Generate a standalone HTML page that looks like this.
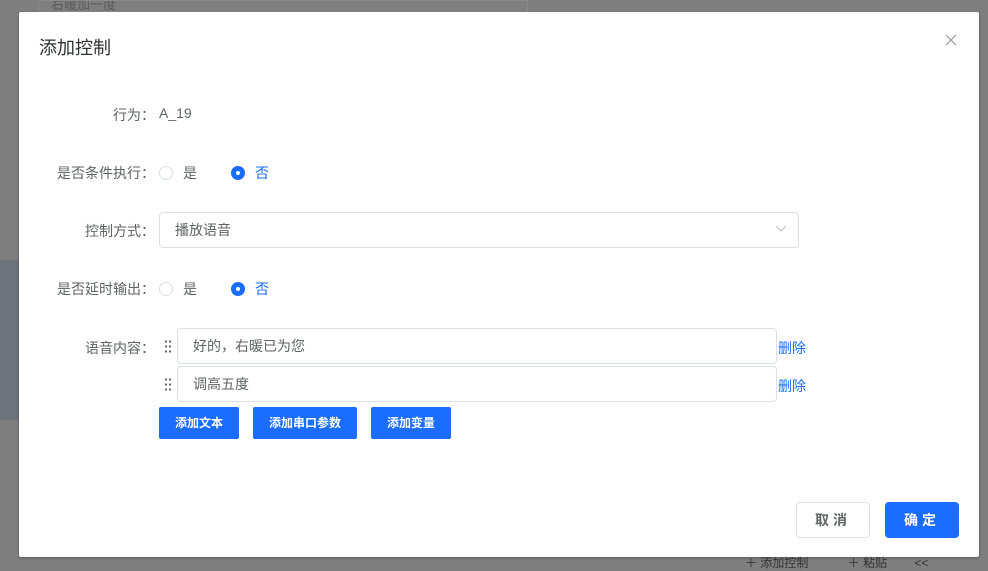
<!DOCTYPE html>
<html><head><meta charset="utf-8"><style>
*{margin:0;padding:0;box-sizing:border-box}
body{width:988px;height:569px;background:#7f7f7f;position:relative;overflow:hidden;font-family:"Liberation Sans","Noto Sans CJK SC",sans-serif;color:#606266;font-size:14px}
.a{position:absolute}
.dlg{left:19px;top:12px;width:960px;height:545px;background:#fff;border-radius:2px;box-shadow:0 1px 3px rgba(0,0,0,.3)}
.lbl{text-align:right;width:145px;left:10px;font-size:14px;color:#606266}
.r{width:14px;height:14px;border-radius:50%;border:1px solid #dcdfe6;background:#fff}
.rc{width:14px;height:14px;border-radius:50%;background:#1a6dff}
.rc::after{content:"";position:absolute;left:5px;top:5px;width:4px;height:4px;border-radius:50%;background:#fff}
.inp{border:1px solid #dcdfe6;border-radius:4px;background:#fff;height:36px;padding-left:15px;line-height:34px;color:#606266}
.btn{background:#1a6dff;color:#fff;font-weight:bold;font-size:12px;text-align:center;height:32px;line-height:32px;border-radius:2px}
.del{color:#1a6dff;font-size:14px}
.grip{width:8px;height:14px;background-image:radial-gradient(circle,#666 1px,transparent 1.3px);background-size:4px 5px}
</style></head><body>
<div class="a" style="left:38px;top:0;width:490px;height:12px;border:1px solid #8a8a8a;color:#5a5a5a;font-size:13px;padding-left:12px;line-height:8px;overflow:hidden">右暖加一度</div>
<div class="a" style="left:0;top:260px;width:19px;height:160px;background:#6f747c"></div>
<div class="a dlg"></div>
<div class="a" style="left:39px;top:34px;font-size:18px;color:#303133">添加控制</div>
<svg class="a" style="left:945px;top:34px" width="12" height="12"><path d="M1 1l10 10M11 1L1 11" stroke="#909399" stroke-width="1.1"/></svg>
<div class="a lbl" style="top:105px">行为：</div>
<div class="a" style="left:159px;top:105px">A_19</div>
<div class="a lbl" style="top:163px">是否条件执行：</div>
<div class="a r" style="left:159px;top:166px"></div><div class="a" style="left:183px;top:163px">是</div>
<div class="a rc" style="left:231px;top:166px"></div><div class="a" style="left:255px;top:163px;color:#1a6dff">否</div>
<div class="a lbl" style="top:221px">控制方式：</div>
<div class="a inp" style="left:159px;top:212px;width:640px">播放语音</div>
<svg class="a" style="left:775px;top:225px" width="12" height="8"><path d="M1 1l5 5 5-5" stroke="#c0c4cc" fill="none" stroke-width="1.2"/></svg>
<div class="a lbl" style="top:279px">是否延时输出：</div>
<div class="a r" style="left:159px;top:282px"></div><div class="a" style="left:183px;top:279px">是</div>
<div class="a rc" style="left:231px;top:282px"></div><div class="a" style="left:255px;top:279px;color:#1a6dff">否</div>
<div class="a lbl" style="top:338px">语音内容：</div>
<div class="a grip" style="left:164px;top:339px"></div>
<div class="a inp" style="left:177px;top:328px;width:600px">好的，右暖已为您</div>
<div class="a del" style="left:778px;top:338px">删除</div>
<div class="a grip" style="left:164px;top:377px"></div>
<div class="a inp" style="left:177px;top:366px;width:600px">调高五度</div>
<div class="a del" style="left:778px;top:376px">删除</div>
<div class="a btn" style="left:159px;top:407px;width:80px">添加文本</div>
<div class="a btn" style="left:253px;top:407px;width:104px">添加串口参数</div>
<div class="a btn" style="left:371px;top:407px;width:80px">添加变量</div>
<div class="a" style="left:796px;top:502px;width:74px;height:36px;border:1px solid #dcdfe6;border-radius:4px;text-align:center;line-height:34px;font-weight:bold;letter-spacing:4px;color:#606266">取消</div>
<div class="a" style="left:885px;top:502px;width:74px;height:36px;background:#1a6dff;border-radius:4px;text-align:center;line-height:36px;font-weight:bold;letter-spacing:4px;color:#fff">确定</div>
<div class="a" style="left:745px;top:554px;font-size:12px;color:#333;white-space:nowrap">＋ 添加控制　　　 ＋ 粘贴　　 &lt;&lt;</div>
</body></html>
